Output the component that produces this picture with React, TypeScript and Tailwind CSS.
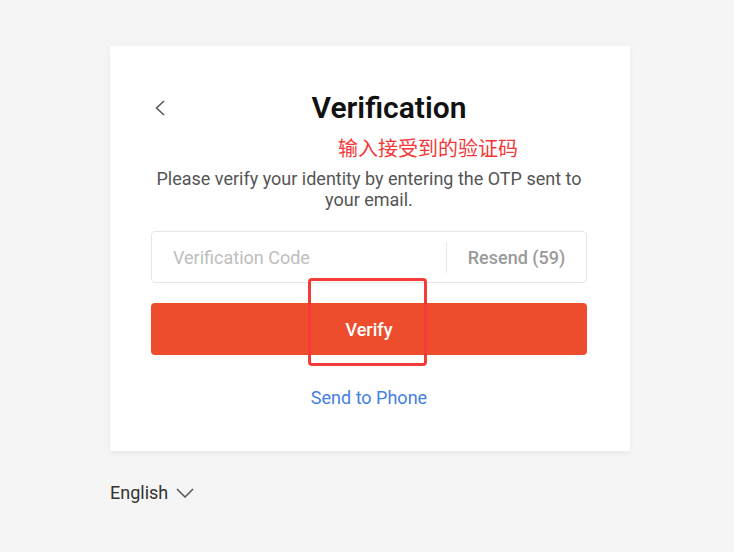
export default function App() {
  return (
    <div
      className="min-h-[552px] w-full bg-[#f5f5f5] text-[#222]"
      style={{ fontFamily: 'Roboto, "Noto Sans CJK SC", sans-serif' }}
    >
      <div className="pl-[110px] pt-[46px]">
        <div className="relative w-[520px] bg-white pb-[43px] pl-[41px] pr-[43px] pt-[44px] shadow-[0_2px_6px_rgba(0,0,0,0.06)]">
          {/* header */}
          <div className="flex h-[36px] items-center">
            <div className="flex w-[40px] items-center pl-[4px]">
              <svg width="10" height="16" viewBox="0 0 10 16" fill="none">
                <polyline points="9,1 1.5,8 9,15" stroke="#555" strokeWidth="1.5" />
              </svg>
            </div>
            <h1 className="flex-1 text-center text-[30px] font-semibold leading-none text-[#111]">Verification</h1>
          </div>

          <div className="mt-[12px] h-[22px] pl-[187px] text-[20px] leading-[22px] text-[#f43838]">
            输入接受到的验证码
          </div>

          <p className="mt-[8px] text-center text-[18px] leading-[21px] text-[#555]">
            Please verify your identity by entering the OTP sent to your email.
          </p>

          {/* code input */}
          <div className="mt-[21px] flex h-[52px] items-center rounded-[4px] border border-[#e6e6e6]">
            <div className="flex-1 pl-[21px] text-[18px] text-[#bdbdbd]">Verification Code</div>
            <div className="h-[31px] w-px bg-[#e8e8e8]" />
            <div className="w-[139px] text-center text-[18px] font-medium text-[#9a9a9a]">Resend (59)</div>
          </div>

          <button className="mt-[20px] flex h-[52px] w-full items-center justify-center rounded-[4px] bg-[#ee4d2d] text-[18px] font-medium text-white">
            Verify
          </button>

          <div className="mt-[33px] text-center text-[18px] leading-[20px] text-[#4580e3]">Send to Phone</div>

          {/* annotation box */}
          <div className="absolute left-[198px] top-[232px] h-[88px] w-[119px] rounded-[4px] border-[3px] border-[#f53a3a]" />
        </div>

        <div className="mt-[28px] flex items-center gap-[8px] text-[18px] text-[#333]">
          <span>English</span>
          <svg width="18" height="10" viewBox="0 0 18 10" fill="none">
            <polyline points="1,1 9,9 17,1" stroke="#555" strokeWidth="1.5" />
          </svg>
        </div>
      </div>
    </div>
  );
}
